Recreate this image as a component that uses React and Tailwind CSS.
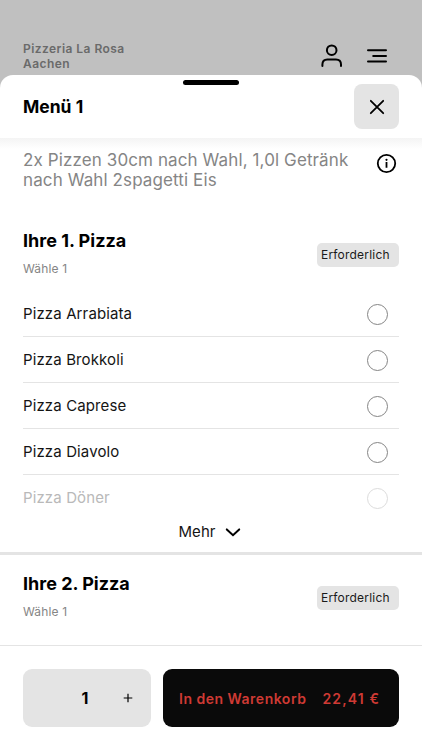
import { useState } from "react";
import clsx from "clsx";

const PIZZAS = [
  "Pizza Arrabiata",
  "Pizza Brokkoli",
  "Pizza Caprese",
  "Pizza Diavolo",
  "Pizza Döner",
];

function GroupHeader({ title, hint }) {
  return (
    <div className="flex justify-between">
      <div>
        <h2 className="text-[18px] leading-6 font-bold text-black">{title}</h2>
        <p className="mt-2 text-[12px] leading-4 tracking-[0.15px] text-[#858585]">
          {hint}
        </p>
      </div>
      <span className="mt-[14px] h-6 w-[82px] rounded-[5px] bg-[#e4e4e4] pl-[4px] text-[12px] leading-6 tracking-[0.2px] text-[#1a1a1a]">
        Erforderlich
      </span>
    </div>
  );
}

function PizzaOption({ name, faded, selected, onSelect }) {
  return (
    <li
      onClick={onSelect}
      className={clsx(
        "flex h-[46px] items-center justify-between pr-[11px]",
        faded ? "text-[#b9b9b9]" : "border-b border-[#e4e4e4] text-[#141414]"
      )}
    >
      <span className="text-[15px] leading-5 tracking-[0.12px]">{name}</span>
      <span
        className={clsx(
          "flex size-[21px] items-center justify-center rounded-full border",
          faded ? "border-[#dcdcdc]" : "mt-px border-[#858585]"
        )}
      >
        {selected && <span className="size-[11px] rounded-full bg-black" />}
      </span>
    </li>
  );
}

export default function App() {
  const [selected, setSelected] = useState(null);
  const [count, setCount] = useState(1);

  return (
    <main className="flex h-[750px] w-full flex-col overflow-hidden bg-[#c0c0c0] font-['Inter',sans-serif]">
      {/* Page behind the sheet */}
      <header className="flex h-[75px] shrink-0 items-start justify-between pr-[34px] pl-[23px]">
        <p className="mt-[41px] text-[12px] leading-[15px] font-semibold tracking-[0.45px] text-[#6a6a6a]">
          Pizzeria La Rosa
          <br />
          Aachen
        </p>
        <div className="mt-[43px] flex gap-[23px]">
          <svg width="23" height="26" viewBox="0 0 23 26" fill="none" stroke="black" strokeWidth="2" strokeLinecap="round">
            <circle cx="11.7" cy="7.2" r="4.8" />
            <path d="M2.4 23v-1.6c0-3 2-5 5-5H16c3 0 5 2 5 5V23" />
          </svg>
          <svg width="22" height="26" viewBox="0 0 22 26" fill="none" stroke="black" strokeWidth="2" strokeLinecap="round">
            <path d="M2 7.3h18M7.2 12.9H20M2 18.5h18" />
          </svg>
        </div>
      </header>

      {/* Sheet */}
      <section className="flex min-h-0 flex-1 flex-col overflow-hidden rounded-t-[13px] bg-white">
        <div className="flex h-[63px] shrink-0 flex-col">
          <div className="mx-auto mt-[5px] h-[5px] w-14 shrink-0 rounded-full bg-black" />
          <div className="-mt-px flex items-center justify-between px-[23px]">
            <h1 className="text-[17.5px] leading-6 font-bold text-black">Menü 1</h1>
            <button className="flex size-[45px] items-center justify-center rounded-[8px] bg-[#e4e4e4]">
              <svg className="ml-[1px]" width="16" height="16" viewBox="0 0 16 16" fill="none" stroke="black" strokeWidth="1.8" strokeLinecap="round">
                <path d="M1.8 1.8l12.4 12.4M14.2 1.8L1.8 14.2" />
              </svg>
            </button>
          </div>
        </div>
        <div className="h-[11px] shrink-0 bg-linear-to-b from-[#f4f4f4] to-white" />

        <div className="min-h-0 flex-1 overflow-hidden">
          <div className="flex h-[80px] items-start justify-between px-[23px]">
            <p className="mt-[0.5px] w-[335px] text-[17px] leading-[20.5px] tracking-[0.11px] text-[#858585]">
              2x Pizzen 30cm nach Wahl, 1,0l Getränk
              <br />
              nach Wahl 2spagetti Eis
            </p>
            <svg className="mt-[4px] mr-[2px]" width="21" height="21" viewBox="0 0 21 21" fill="none" stroke="black">
              <circle cx="10.5" cy="10.5" r="8.7" strokeWidth="1.8" />
              <path d="M10.5 9v5.7" strokeWidth="1.8" />
              <circle cx="10.5" cy="6.8" r="1.1" fill="black" stroke="none" />
            </svg>
          </div>

          <div className="px-[23px]">
            <GroupHeader title="Ihre 1. Pizza" hint="Wähle 1" />
            <ul className="mt-[14px]">
              {PIZZAS.map((name, i) => (
                <PizzaOption
                  key={name}
                  name={name}
                  faded={i === PIZZAS.length - 1}
                  selected={selected === name}
                  onSelect={() => setSelected(name)}
                />
              ))}
            </ul>
          </div>
          <button className="flex h-[31px] w-full items-start justify-center gap-[9px] pr-[3px] text-[15px] leading-5 tracking-[0.1px] text-[#141414]">
            <span className="mt-px">Mehr</span>
            <svg className="mt-[5px]" width="16" height="12" viewBox="0 0 16 12" fill="none" stroke="black" strokeWidth="2" strokeLinecap="round">
              <path d="M1.8 3.4L8 9.2l6.2-5.8" />
            </svg>
          </button>

          <div className="border-t-[3px] border-[#e4e4e4] px-[23px] pt-[17px]">
            <GroupHeader title="Ihre 2. Pizza" hint="Wähle 1" />
          </div>
        </div>

        {/* Cart bar */}
        <footer className="flex h-[105px] shrink-0 items-start gap-3 border-t border-[#e4e4e4] px-[23px] pt-[23px]">
          <div className="grid h-[58px] w-[128px] grid-cols-3 items-center rounded-[9px] bg-[#e4e4e4]">
            <span />
            <span className="pr-1 text-center text-[16px] font-bold">{count}</span>
            <button className="flex justify-center pr-1" onClick={() => setCount(count + 1)}>
              <svg width="10" height="10" viewBox="0 0 10 10" stroke="black" strokeWidth="1.2">
                <path d="M5 .7v8.6M.7 5h8.6" />
              </svg>
            </button>
          </div>
          <button className="flex h-[58px] flex-1 items-center justify-between rounded-[9px] bg-[#0a0a0a] pr-[19px] pl-4 text-[14px] font-semibold tracking-[0.5px] text-[#cf3a34]">
            <span>In den Warenkorb</span>
            <span className="tracking-[1.1px]">22,41 €</span>
          </button>
        </footer>
      </section>
    </main>
  );
}
